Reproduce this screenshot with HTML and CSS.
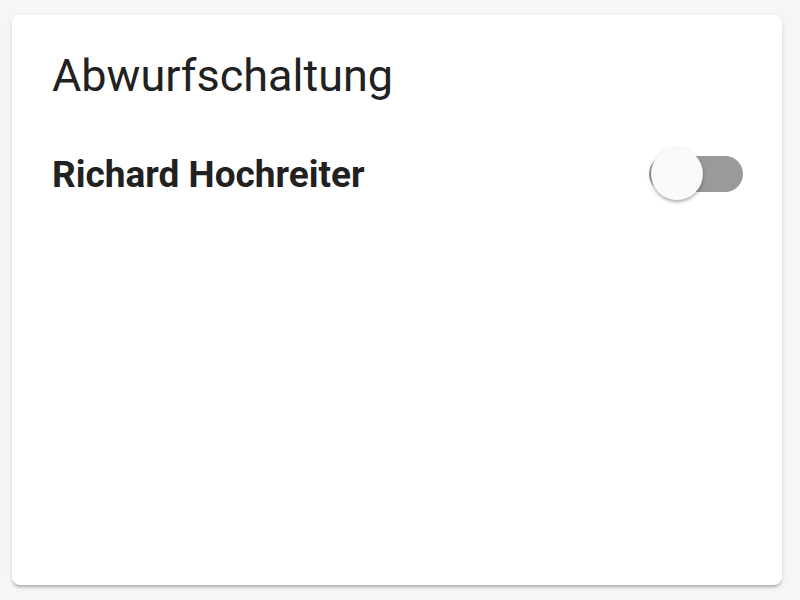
FILE: index.html
```html
<!DOCTYPE html>
<html lang="de">
<head>
    <meta charset="UTF-8">
    <meta name="viewport" content="width=device-width, initial-scale=1.0">
    <title>Abwurfschaltung</title>
    <link rel="stylesheet" href="styles.css">
</head>
<body>

    <div class="card">
        <h1 class="card-header">Abwurfschaltung</h1>

        <div class="entity-row">
            <span class="entity-name">Richard Hochreiter</span>
            <label class="switch">
                <input type="checkbox">
                <span class="track"></span>
                <span class="thumb"></span>
            </label>
        </div>
    </div>

</body>
</html>
```

FILE: styles.css
```css
html, body {
    margin: 0;
    height: 100%;
}

body {
    font-family: Roboto, 'Noto Sans', sans-serif;
    background: #f6f6f6;
    padding: 15px 18px 15px 12px;
    box-sizing: border-box;
    color: #212121;
}

.card {
    background: #fff;
    height: 570px;
    border-radius: 8px;
    box-shadow: 0 3px 3px -1px rgba(0,0,0,0.25), 0 2px 6px rgba(0,0,0,0.08);
    padding: 0 39px 0 40px;
    box-sizing: border-box;
}

.card-header {
    margin: 0;
    padding-top: 33px;
    font-size: 45px;
    font-weight: 400;
    line-height: 56px;
    color: #212121;
}

.entity-row {
    display: flex;
    align-items: center;
    justify-content: space-between;
    margin-top: 44px;
    height: 52px;
}

.entity-name {
    font-size: 37px;
    font-weight: 700;
    color: #212121;
}

.switch {
    position: relative;
    width: 94px;
    height: 52px;
}

.switch input {
    display: none;
}

.track {
    position: absolute;
    left: 0;
    right: 0;
    top: 8px;
    height: 36px;
    border-radius: 18px;
    background: #9a9a9a;
}

.thumb {
    position: absolute;
    left: 2px;
    top: 0;
    width: 52px;
    height: 52px;
    border-radius: 50%;
    background: #fafafa;
    box-shadow: 0 2px 3px rgba(0,0,0,0.25), 0 1px 6px rgba(0,0,0,0.1);
}
```
